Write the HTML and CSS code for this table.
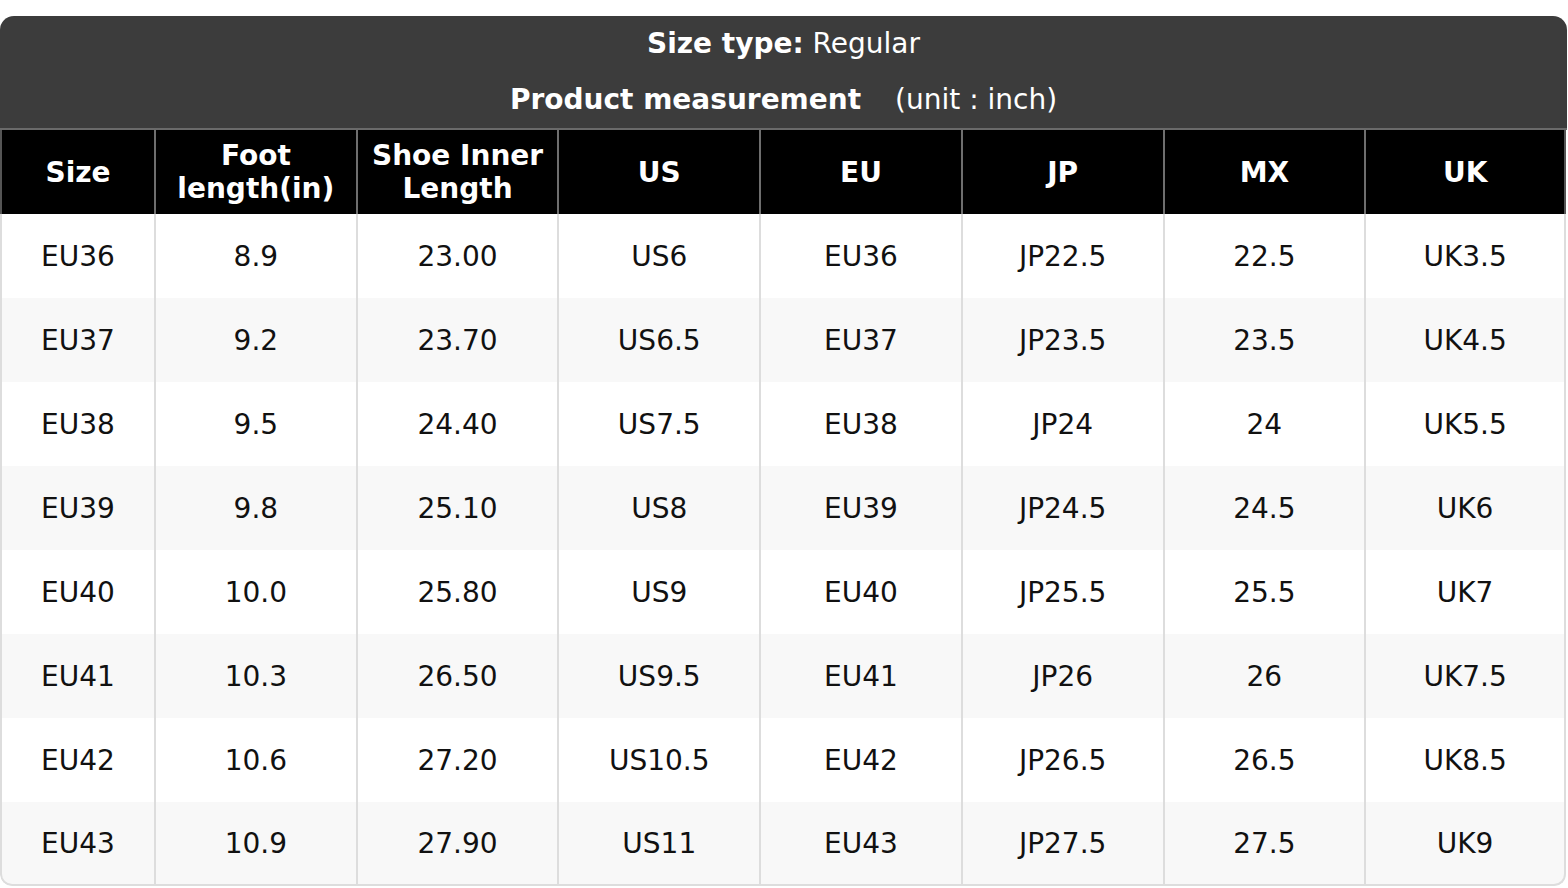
FILE: index.html
```html
<!DOCTYPE html>
<html>
<head>
<meta charset="utf-8">
<link rel="stylesheet" href="styles.css">
</head>
<body>
<div class="chart">
  <div class="title">
    <div class="title-line"><b>Size type:</b> Regular</div>
    <div class="title-line"><b>Product measurement</b><span class="unit">(unit : inch)</span></div>
  </div>
  <table class="grid">
    <colgroup><col class="c-first"><col><col><col><col><col><col><col></colgroup>
    <thead>
      <tr><th>Size</th><th>Foot<br>length(in)</th><th>Shoe Inner<br>Length</th><th>US</th><th>EU</th><th>JP</th><th>MX</th><th>UK</th></tr>
    </thead>
    <tbody>
      <tr><td>EU36</td><td>8.9</td><td>23.00</td><td>US6</td><td>EU36</td><td>JP22.5</td><td>22.5</td><td>UK3.5</td></tr>
      <tr><td>EU37</td><td>9.2</td><td>23.70</td><td>US6.5</td><td>EU37</td><td>JP23.5</td><td>23.5</td><td>UK4.5</td></tr>
      <tr><td>EU38</td><td>9.5</td><td>24.40</td><td>US7.5</td><td>EU38</td><td>JP24</td><td>24</td><td>UK5.5</td></tr>
      <tr><td>EU39</td><td>9.8</td><td>25.10</td><td>US8</td><td>EU39</td><td>JP24.5</td><td>24.5</td><td>UK6</td></tr>
      <tr><td>EU40</td><td>10.0</td><td>25.80</td><td>US9</td><td>EU40</td><td>JP25.5</td><td>25.5</td><td>UK7</td></tr>
      <tr><td>EU41</td><td>10.3</td><td>26.50</td><td>US9.5</td><td>EU41</td><td>JP26</td><td>26</td><td>UK7.5</td></tr>
      <tr><td>EU42</td><td>10.6</td><td>27.20</td><td>US10.5</td><td>EU42</td><td>JP26.5</td><td>26.5</td><td>UK8.5</td></tr>
      <tr><td>EU43</td><td>10.9</td><td>27.90</td><td>US11</td><td>EU43</td><td>JP27.5</td><td>27.5</td><td>UK9</td></tr>
    </tbody>
  </table>
</div>
</body>
</html>
```
FILE: styles.css
```css
html, body {
  margin: 0;
  padding: 0;
  background: #ffffff;
}
body {
  padding-top: 16px;
  font-family: "DejaVu Sans", "Liberation Sans", sans-serif;
  font-size: 28px;
  color: #111111;
}
.chart {
  width: 1567px;
  border-radius: 14px 14px 12px 12px;
  overflow: hidden;
}
.title {
  background: #3c3c3c;
  color: #ffffff;
  text-align: center;
  border-bottom: 2px solid #6a6a6a;
}
.title-line {
  height: 56px;
  line-height: 56px;
}
.title-line b {
  font-weight: bold;
}
.unit {
  margin-left: 34px;
}
.grid {
  width: 1566px;
  table-layout: fixed;
  border-collapse: separate;
  border-spacing: 0;
}
.c-first {
  width: 154px;
}
.grid th {
  background: #000000;
  color: #ffffff;
  font-weight: bold;
  line-height: 33px;
  height: 84px;
  padding: 0;
  box-sizing: border-box;
  text-align: center;
  border-left: 2px solid #6e6e6e;
}
.grid th:first-child {
  border-left: 2px solid #555555;
}
.grid th:last-child {
  border-right: 2px solid #555555;
}
.grid td {
  height: 84px;
  padding: 0;
  box-sizing: border-box;
  text-align: center;
  border-left: 2px solid #dddddd;
}
.grid td:last-child {
  border-right: 2px solid #dddddd;
}
.grid tbody tr:nth-child(even) td {
  background: #f8f8f8;
}
.grid tbody tr:last-child td {
  border-bottom: 2px solid #dddddd;
}
.grid tbody tr:last-child td:first-child {
  border-bottom-left-radius: 12px;
}
.grid tbody tr:last-child td:last-child {
  border-bottom-right-radius: 12px;
}
```
